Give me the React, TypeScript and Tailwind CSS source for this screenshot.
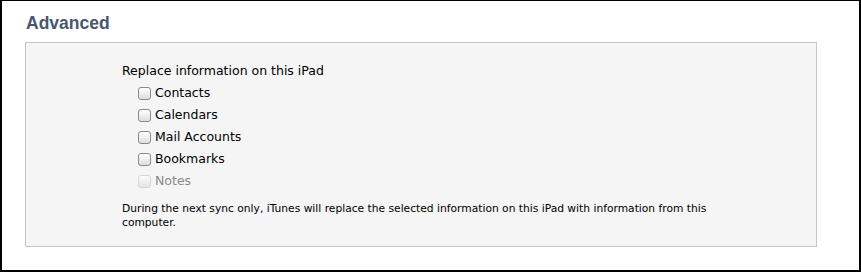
import React from "react";

const items = [
  { label: "Contacts", disabled: false },
  { label: "Calendars", disabled: false },
  { label: "Mail Accounts", disabled: false },
  { label: "Bookmarks", disabled: false },
  { label: "Notes", disabled: true },
];

function Box({ disabled }: { disabled: boolean }) {
  return (
    <span
      className={
        "inline-block w-[13px] h-[13px] rounded-[3px] border bg-gradient-to-b from-white to-[#dedede] " +
        (disabled ? "border-[#c8c8c8] opacity-70" : "border-[#8a8a8a]")
      }
    />
  );
}

export default function App() {
  return (
    <div
      className="w-[861px] h-[272px] bg-white border-t border-l-2 border-r-2 border-b-2 border-black pt-[11px] pl-[23px] pr-[42px]"
      style={{ fontFamily: '"DejaVu Sans", "Liberation Sans", sans-serif' }}
    >
      <h2
        className="text-[17.5px] leading-[22px] font-bold text-[#4a576b] ml-[1px]"
        style={{ fontFamily: '"Liberation Sans", Arial, sans-serif' }}
      >
        Advanced
      </h2>
      <div className="mt-[8px] h-[205px] border border-[#c6c6c6] bg-[#f5f5f5] pl-[96px] pt-[19px]">
        <div className="text-[12.5px] leading-[18px] text-black">Replace information on this iPad</div>
        <div className="mt-[2px] flex flex-col pl-[16px]">
          {items.map((it) => (
            <label key={it.label} className="h-[22px] flex items-center gap-[4px]">
              <Box disabled={it.disabled} />
              <span className={"text-[12.5px] " + (it.disabled ? "text-[#8a8a8a]" : "text-black")}>{it.label}</span>
            </label>
          ))}
        </div>
        <p className="mt-[10px] text-[10.7px] leading-[14px] text-black w-[600px]">
          During the next sync only, iTunes will replace the selected information on this iPad with information from this computer.
        </p>
      </div>
    </div>
  );
}
